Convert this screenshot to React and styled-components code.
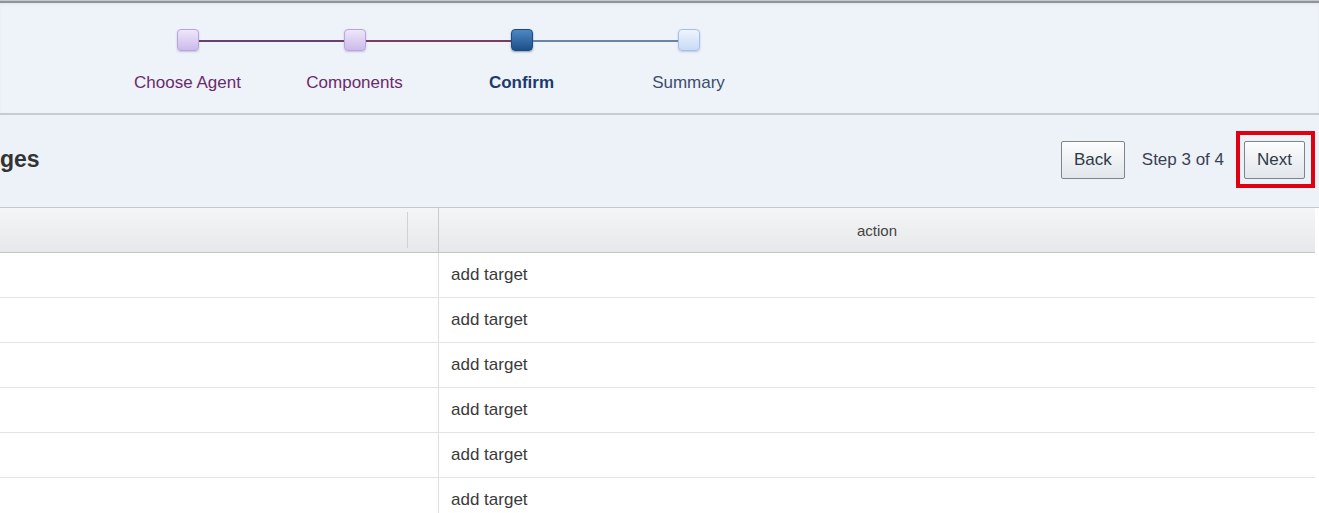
import styled, { createGlobalStyle, css } from 'styled-components'

const GlobalStyle = createGlobalStyle`
  html, body {
    margin: 0;
    padding: 0;
    background: #ffffff;
  }
  body {
    font-family: "Liberation Sans", Arial, sans-serif;
    color: #333;
    overflow: hidden;
  }
`

const StPage = styled.div`
  width: 1319px;
  height: 513px;
  overflow: hidden;
  background: #ffffff;
`

const StTrain = styled.div`
  height: 112px;
  background: #eef2f9;
  border-top: 1px solid #c4c8ce;
  box-shadow: inset 0 2px 0 #8f949b, inset 0 4px 3px -1px #e0e4ea;
  padding-left: 104px;
  display: flex;
  align-items: flex-start;
`

const StStep = styled.div`
  width: 167px;
  padding-top: 28px;
  display: flex;
  flex-direction: column;
  align-items: center;
`

const StTrack = styled.div`
  width: 100%;
  height: 22px;
  display: flex;
  align-items: center;
`

const StLine = styled.div`
  flex: 1;
  height: 2px;
  margin-top: 1px;
  background: ${(p) => p.$color || 'transparent'};
`

const markerStyles = {
  done: css`
    background: linear-gradient(#efe6fa, #cbbbea);
    border: 1px solid #b8a5dc;
    box-shadow: 0 1px 2px rgba(120, 90, 170, 0.35);
  `,
  current: css`
    background: linear-gradient(#4d88c4, #1d4f88);
    border: 1px solid #1c4a80;
    box-shadow: 0 1px 2px rgba(20, 50, 90, 0.45);
  `,
  todo: css`
    background: linear-gradient(#eef4fd, #c8dbf5);
    border: 1px solid #a8bfe4;
    box-shadow: 0 1px 2px rgba(90, 120, 180, 0.35);
  `,
}

const StMarker = styled.div`
  width: 22px;
  height: 22px;
  box-sizing: border-box;
  border-radius: 4px;
  flex: none;
  ${(p) => markerStyles[p.$state]}
`

const StStepLabel = styled.div`
  margin-top: 22px;
  font-size: 17px;
  line-height: 20px;
  white-space: nowrap;
  color: ${(p) =>
    p.$state === 'current' ? '#1d3a6c' : p.$state === 'todo' ? '#3c4d6f' : '#6a2b6c'};
  font-weight: ${(p) => (p.$state === 'current' ? 'bold' : 'normal')};
`

const StHeaderBar = styled.div`
  height: 92px;
  background: #edf1f8;
  border-top: 2px solid #c7ccd4;
  border-bottom: 1px solid #c4c7cc;
  display: flex;
  align-items: center;
  justify-content: space-between;
  padding-right: 4px;
`

const StTitle = styled.h2`
  margin: 0;
  font-size: 23px;
  font-weight: bold;
  color: #333;
  margin-top: -3px;
`

const StActions = styled.div`
  display: flex;
  align-items: center;
  margin-top: -3px;
`

const StButton = styled.button`
  height: 38px;
  padding: 0 12px;
  box-sizing: border-box;
  font-family: "Liberation Sans", Arial, sans-serif;
  font-size: 17px;
  color: #2f3a48;
  background: linear-gradient(#fbfcfd, #e2e6eb);
  border: 1px solid #7e848e;
  border-radius: 2px;
  box-shadow: inset 0 1px 0 #ffffff;
  cursor: pointer;
`

const StStepText = styled.span`
  font-size: 17px;
  color: #3a4250;
  margin: 0 12px 0 17px;
  white-space: nowrap;
`

const StHighlight = styled.div`
  border: 4px solid #e0000f;
  padding: 6px 6px 5px 4px;
  display: flex;
`

const StTable = styled.div`
  width: 1315px;
`

const StHeadRow = styled.div`
  height: 44px;
  display: flex;
  background: linear-gradient(#f4f5f6, #e6e8eb);
  border-bottom: 1px solid #c2c4c8;
`

const StHeadCell = styled.div`
  width: ${(p) => (p.$width ? `${p.$width}px` : 'auto')};
  flex: ${(p) => (p.$width ? 'none' : '1')};
  display: flex;
  align-items: center;
  justify-content: center;
  font-size: 15px;
  color: #444;
  box-sizing: border-box;
  border-right: ${(p) => (p.$divider ? `1px solid ${p.$divider}` : 'none')};
  ${(p) =>
    p.$short &&
    css`
      height: 36px;
      align-self: center;
    `}
`

const StRow = styled.div`
  height: 44px;
  display: flex;
  border-bottom: 1px solid #e3e4e6;
  background: #ffffff;
`

const StCell = styled.div`
  width: ${(p) => (p.$width ? `${p.$width}px` : 'auto')};
  flex: ${(p) => (p.$width ? 'none' : '1')};
  box-sizing: border-box;
  display: flex;
  align-items: center;
  padding-left: 12px;
  font-size: 17px;
  color: #3a3a3a;
  border-right: ${(p) => (p.$divider ? '1px solid #dedfe1' : 'none')};
`

const steps = [
  { label: 'Choose Agent', state: 'done' },
  { label: 'Components', state: 'done' },
  { label: 'Confirm', state: 'current' },
  { label: 'Summary', state: 'todo' },
]

const lineColors = [null, '#6d3f6f', '#7a3c63', '#6b82ab']

const rows = Array.from({ length: 6 }, () => 'add target')

export default function App() {
  return (
    <>
      <GlobalStyle />
      <StPage>
        <StTrain>
          {steps.map((s, i) => (
            <StStep key={s.label}>
              <StTrack>
                <StLine $color={lineColors[i]} />
                <StMarker $state={s.state} />
                <StLine $color={lineColors[i + 1]} />
              </StTrack>
              <StStepLabel $state={s.state}>{s.label}</StStepLabel>
            </StStep>
          ))}
        </StTrain>

        <StHeaderBar>
          <StTitle>ges</StTitle>
          <StActions>
            <StButton>Back</StButton>
            <StStepText>Step 3 of 4</StStepText>
            <StHighlight>
              <StButton>Next</StButton>
            </StHighlight>
          </StActions>
        </StHeaderBar>

        <StTable>
          <StHeadRow>
            <StHeadCell $width={408} $divider="#cfd1d4" $short />
            <StHeadCell $width={31} $divider="#c8cacd" />
            <StHeadCell>action</StHeadCell>
          </StHeadRow>
          {rows.map((r, i) => (
            <StRow key={i}>
              <StCell $width={439} $divider />
              <StCell>{r}</StCell>
            </StRow>
          ))}
        </StTable>
      </StPage>
    </>
  )
}
